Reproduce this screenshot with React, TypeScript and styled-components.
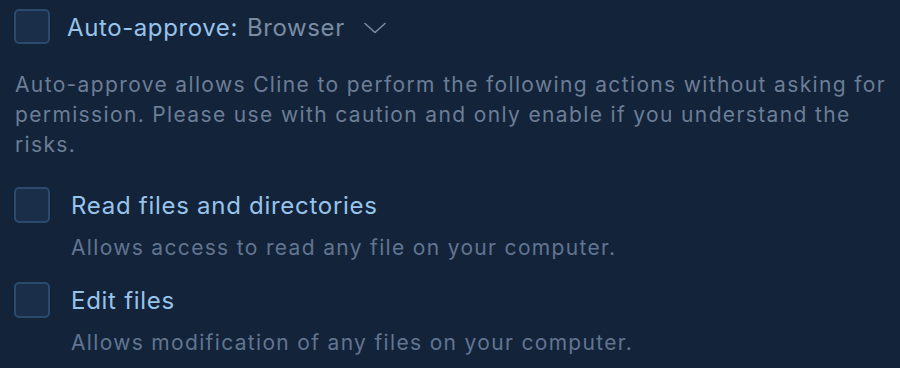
import React from "react";
import styled, { createGlobalStyle } from "styled-components";

const Global = createGlobalStyle`
  html, body {
    margin: 0;
    padding: 0;
    background: #13233a;
  }
  body {
    font-family: Inter, "Noto Sans", "Liberation Sans", sans-serif;
    -webkit-font-smoothing: antialiased;
  }
`;

const Page = styled.div`
  width: 900px;
  height: 368px;
  box-sizing: border-box;
  padding: 9px 0 0 14px;
  background: #13233a;
  overflow: hidden;
`;

const Header = styled.div`
  display: flex;
  align-items: center;
  height: 35px;
`;

const Box = styled.span<{ $h?: number }>`
  display: inline-block;
  flex: none;
  width: 36px;
  height: ${(p) => p.$h ?? 36}px;
  box-sizing: border-box;
  border: 2px solid #2b4a6c;
  border-radius: 5px;
  background: #1b2e49;
`;

const HeaderLabel = styled.span`
  margin-left: 17px;
  margin-top: 2px;
  font-size: 24px;
  color: #98c3ea;
  letter-spacing: 0.6px;
`;

const HeaderValue = styled.span`
  margin-left: 9px;
  margin-top: 2px;
  font-size: 24px;
  color: #7b8ca2;
  letter-spacing: 0.6px;
`;

const Chevron = styled.svg`
  margin-left: 19px;
  margin-top: 3px;
`;

const Description = styled.p`
  margin: 26px 0 0 1px;
  font-size: 21px;
  line-height: 30px;
  color: #6c7e95;
  letter-spacing: 1.36px;
`;

const List = styled.div`
  display: flex;
  flex-direction: column;
  gap: 19px;
  margin-top: 27px;
`;

const Row = styled.div`
  display: grid;
  grid-template-columns: 36px 1fr;
  column-gap: 21px;
  row-gap: 10px;
  align-items: center;
`;

const Title = styled.span`
  font-size: 24px;
  color: #98c3ea;
  letter-spacing: 0.72px;
`;

const Sub = styled.span`
  grid-column: 2;
  font-size: 21px;
  line-height: 30px;
  color: #627590;
  letter-spacing: 1.33px;
`;

const items = [
  {
    title: "Read files and directories",
    sub: "Allows access to read any file on your computer.",
  },
  {
    title: "Edit files",
    sub: "Allows modification of any files on your computer.",
  },
];

export default function App() {
  return (
    <>
      <Global />
      <Page>
        <Header>
          <Box $h={35} />
          <HeaderLabel>Auto-approve:</HeaderLabel>
          <HeaderValue>Browser</HeaderValue>
          <Chevron width="22" height="12" viewBox="0 0 22 12" fill="none">
            <path d="M1 1.5 L11 10.5 L21 1.5" stroke="#7b8ca2" strokeWidth="1.6" strokeLinecap="round" strokeLinejoin="round" />
          </Chevron>
        </Header>
        <Description>
          Auto-approve allows Cline to perform the following actions without asking for permission. Please use with
          caution and only enable if you understand the risks.
        </Description>
        <List>
          {items.map((it) => (
            <Row key={it.title}>
              <Box />
              <Title>{it.title}</Title>
              <Sub>{it.sub}</Sub>
            </Row>
          ))}
        </List>
      </Page>
    </>
  );
}
